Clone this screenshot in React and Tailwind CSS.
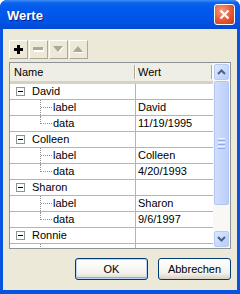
const people = [
  { name: "David", label: "David", data: "11/19/1995" },
  { name: "Colleen", label: "Colleen", data: "4/20/1993" },
  { name: "Sharon", label: "Sharon", data: "9/6/1997" },
  { name: "Ronnie", hidden: true },
];

function ParentRow({ name }) {
  return (
    <div className="flex h-[16px] border-b border-[#b8b5a8]">
      <div className="w-[126px] border-r border-[#b8b5a8] flex items-center pl-[6px]">
        <div className="w-[9px] h-[9px] border border-[#8a9398] bg-white flex items-center justify-center">
          <div className="w-[5px] h-[1px] bg-black" />
        </div>
        <span className="ml-[7px]">{name}</span>
      </div>
      <div className="flex-1" />
    </div>
  );
}

function ChildRow({ label, value, last }) {
  return (
    <div className="flex h-[16px] border-b border-[#b8b5a8]">
      <div className="w-[126px] border-r border-[#b8b5a8] relative flex items-center pl-[43px]">
        <span
          className={
            last
              ? "absolute left-[30px] top-0 h-[8px] border-l border-dotted border-[#8f8f8f]"
              : "absolute left-[30px] top-0 h-full border-l border-dotted border-[#8f8f8f]"
          }
        />
        <span className="absolute left-[31px] top-[7px] w-[11px] border-t border-dotted border-[#8f8f8f]" />
        {label && <span>{label}</span>}
      </div>
      <div className="flex-1 pl-[2px] flex items-center">{value}</div>
    </div>
  );
}

function ScrollButton({ up }) {
  return (
    <div className="h-[16px] mx-[1px] my-[1px] rounded-[2px] border border-[#b7c9f7] bg-[linear-gradient(135deg,#dde8ff,#b9cdfa)] flex items-center justify-center">
      <svg width="9" height="6" viewBox="0 0 9 6">
        <polyline
          points={up ? "1,5 4.5,1.5 8,5" : "1,1 4.5,4.5 8,1"}
          fill="none"
          stroke="#4d6185"
          strokeWidth="2"
        />
      </svg>
    </div>
  );
}

function ToolButton({ children }) {
  return (
    <div className="w-[19px] h-[19px] border border-t-white border-l-white border-r-[#aca899] border-b-[#aca899] bg-[#ece9d8] flex items-center justify-center">
      {children}
    </div>
  );
}

export default function App() {
  return (
    <div className="w-[240px] h-[294px] bg-[#0553e0] rounded-t-[7px] overflow-hidden flex flex-col font-['Liberation_Sans',Arial,sans-serif] text-[11px] text-black">
      <div className="h-[29px] shrink-0 flex items-center justify-between pl-[7px] pr-[5px] bg-[linear-gradient(to_bottom,#3d8ff8_0%,#0b62ea_10%,#0058ee_35%,#0054e3_75%,#0349d4_100%)]">
        <span className="text-white font-bold text-[13px] pt-[2px] [text-shadow:1px_1px_0_#0a1e8a]">
          Werte
        </span>
        <div className="w-[21px] h-[21px] rounded-[3px] border border-white bg-[radial-gradient(circle_at_35%_30%,#f49a7e,#e2532f_60%,#c8391a)] flex items-center justify-center">
          <svg width="11" height="11" viewBox="0 0 11 11">
            <path d="M1.5 1.5 L9.5 9.5 M9.5 1.5 L1.5 9.5" stroke="white" strokeWidth="2.2" />
          </svg>
        </div>
      </div>

      <div className="flex-1 mx-[3px] mb-[4px] bg-[#ece9d8] flex flex-col px-[6px] pt-[11px]">
        <div className="flex gap-[1px]">
          <ToolButton>
            <svg width="9" height="9" viewBox="0 0 9 9">
              <rect x="3" y="0" width="3" height="9" fill="black" />
              <rect x="0" y="3" width="9" height="3" fill="black" />
            </svg>
          </ToolButton>
          <ToolButton>
            <svg width="11" height="5" viewBox="0 0 11 5">
              <rect x="1" y="1" width="10" height="4" fill="white" />
              <rect x="0" y="0" width="10" height="3" fill="#aca899" />
            </svg>
          </ToolButton>
          <ToolButton>
            <svg width="12" height="8" viewBox="0 0 12 8">
              <polygon points="1,1 11,1 6,7" fill="white" />
              <polygon points="0,0 10,0 5,6" fill="#aca899" />
            </svg>
          </ToolButton>
          <ToolButton>
            <svg width="12" height="8" viewBox="0 0 12 8">
              <polygon points="1,7 11,7 6,1" fill="white" />
              <polygon points="0,6 10,6 5,0" fill="#aca899" />
            </svg>
          </ToolButton>
        </div>

        <div className="mt-[3px] h-[187px] border border-[#8c9498] bg-white flex overflow-hidden">
          <div className="w-[203px] flex flex-col overflow-hidden">
            <div className="h-[21px] shrink-0 flex bg-[#efeee6] border-b-[3px] border-[#d6d2c2]">
              <div className="w-[126px] pl-[4px] flex items-center justify-between">
                <span>Name</span>
                <span className="h-[14px] w-[2px] border-l border-[#aca899] bg-white" />
              </div>
              <div className="flex-1 pl-[2px] flex items-center justify-between">
                <span>Wert</span>
                <span className="h-[14px] w-[2px] border-l border-[#aca899] bg-white" />
              </div>
            </div>
            {people.map((p) => (
              <div key={p.name}>
                <ParentRow name={p.name} />
                <ChildRow label={p.hidden ? "" : "label"} value={p.label} />
                <ChildRow label={p.hidden ? "" : "data"} value={p.data} last />
              </div>
            ))}
          </div>

          <div className="w-[17px] flex flex-col bg-[#f9f8f4]">
            <ScrollButton up />
            <div className="flex-1 flex flex-col">
              <div className="mx-[1px] h-[124px] rounded-[2px] border border-[#b3c7f5] bg-[linear-gradient(to_right,#d0ddfd,#bccffb)] flex flex-col items-center justify-center gap-[1px]">
                <span className="w-[7px] h-[1px] bg-[#eef3ff]" />
                <span className="w-[7px] h-[1px] bg-[#8daaf0]" />
                <span className="w-[7px] h-[1px] bg-[#eef3ff]" />
                <span className="w-[7px] h-[1px] bg-[#8daaf0]" />
                <span className="w-[7px] h-[1px] bg-[#eef3ff]" />
                <span className="w-[7px] h-[1px] bg-[#8daaf0]" />
              </div>
            </div>
            <ScrollButton />
          </div>
        </div>

        <div className="mt-[9px] flex justify-end gap-[10px]">
          <button className="w-[73px] h-[22px] px-0 rounded-[3px] border border-[#003c74] bg-[linear-gradient(to_bottom,#ffffff,#f3f2ec_70%,#dcd7cb)] shadow-[inset_0_0_0_1px_#bcd4f6,inset_0_-2px_0_#89ade4] text-[11px]">
            OK
          </button>
          <button className="w-[73px] h-[22px] px-0 rounded-[3px] border border-[#003c74] bg-[linear-gradient(to_bottom,#ffffff,#f3f2ec_70%,#d6d0c5)] text-[11px]">
            Abbrechen
          </button>
        </div>
      </div>
    </div>
  );
}
